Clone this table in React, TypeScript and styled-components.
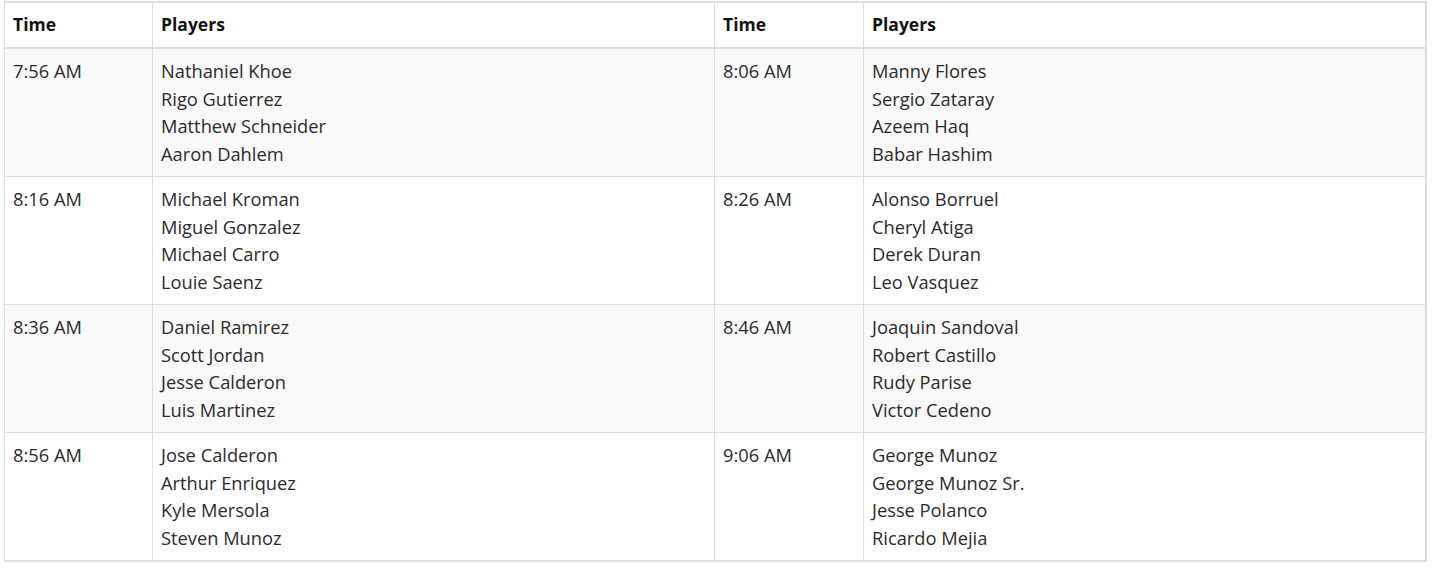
import React from "react";
import styled, { createGlobalStyle } from "styled-components";

const GlobalStyle = createGlobalStyle`
    body {
        margin: 0;
        padding: 1px 6px 0 4px;
        background: #fff;
        font-family: "Open Sans", "Liberation Sans", sans-serif;
    }
`;

const Table = styled.table`
    width: 1421px;
    border-collapse: collapse;
    table-layout: fixed;
    border-top: 2px solid #ddd;
    border-right: 2px solid #ddd;
    border-bottom: 2px solid #ddd;
    border-left: 1px solid #ddd;
    font-size: 18.3px;
    line-height: 27.75px;
`;

const HeadCell = styled.th<{ $w: number }>`
    box-sizing: border-box;
    width: ${(p) => p.$w}px;
    padding: 8px;
    text-align: left;
    font-weight: 700;
    font-size: 17.5px;
    color: #111;
    border: 1px solid #ddd;
    border-bottom: 2px solid #ddd;
`;

const Row = styled.tr<{ $striped: boolean }>`
    background: ${(p) => (p.$striped ? "#f9f9f9" : "#fff")};
`;

const Cell = styled.td`
    padding: 8px;
    vertical-align: top;
    color: #2b2b2b;
    border: 1px solid #ddd;
`;

const Name = styled.div`
    white-space: nowrap;
`;

const slots: [string, string[]][] = [
    ["7:56 AM", ["Nathaniel Khoe", "Rigo Gutierrez", "Matthew Schneider", "Aaron Dahlem"]],
    ["8:06 AM", ["Manny Flores", "Sergio Zataray", "Azeem Haq", "Babar Hashim"]],
    ["8:16 AM", ["Michael Kroman", "Miguel Gonzalez", "Michael Carro", "Louie Saenz"]],
    ["8:26 AM", ["Alonso Borruel", "Cheryl Atiga", "Derek Duran", "Leo Vasquez"]],
    ["8:36 AM", ["Daniel Ramirez", "Scott Jordan", "Jesse Calderon", "Luis Martinez"]],
    ["8:46 AM", ["Joaquin Sandoval", "Robert Castillo", "Rudy Parise", "Victor Cedeno"]],
    ["8:56 AM", ["Jose Calderon", "Arthur Enriquez", "Kyle Mersola", "Steven Munoz"]],
    ["9:06 AM", ["George Munoz", "George Munoz Sr.", "Jesse Polanco", "Ricardo Mejia"]],
];

const rows: [string, string[]][][] = [];
for (let i = 0; i < slots.length; i += 2) rows.push([slots[i], slots[i + 1]]);

export default function App() {
    return (
        <>
            <GlobalStyle />
            <Table>
                <thead>
                    <tr>
                        <HeadCell $w={148}>Time</HeadCell>
                        <HeadCell $w={562}>Players</HeadCell>
                        <HeadCell $w={149}>Time</HeadCell>
                        <HeadCell $w={562}>Players</HeadCell>
                    </tr>
                </thead>
                <tbody>
                    {rows.map((pair, i) => (
                        <Row key={i} $striped={i % 2 === 0}>
                            {pair.map(([time, players]) => (
                                <React.Fragment key={time}>
                                    <Cell>{time}</Cell>
                                    <Cell>
                                        {players.map((p) => (
                                            <Name key={p}>{p}</Name>
                                        ))}
                                    </Cell>
                                </React.Fragment>
                            ))}
                        </Row>
                    ))}
                </tbody>
            </Table>
        </>
    );
}
